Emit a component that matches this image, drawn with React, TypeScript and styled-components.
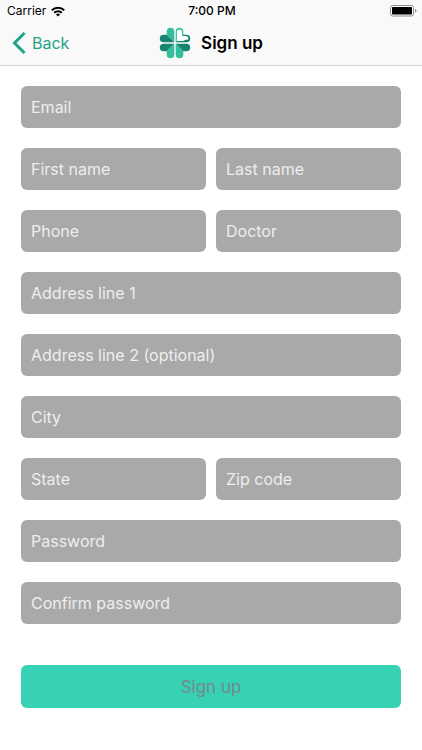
import React from "react";
import styled, { createGlobalStyle } from "styled-components";

const GlobalStyle = createGlobalStyle`
  *, *::before, *::after { box-sizing: border-box; }
  body {
    margin: 0;
    background: #ffffff;
    font-family: Inter, "Liberation Sans", sans-serif;
    color: #000000;
  }
  button, input { font-family: inherit; }
`;

const Screen = styled.div`
  display: flex;
  flex-direction: column;
  min-height: 100vh;
`;

const Header = styled.header`
  background: #f9f9f9;
  border-bottom: 1px solid #d3d3d3;
`;

const Thirds = styled.div`
  display: grid;
  grid-template-columns: 1fr auto 1fr;
  align-items: center;
`;

const StatusBar = styled(Thirds)`
  height: 22px;
  padding: 0 5px 0 7px;
  font-size: 12px;
  line-height: 16px;
`;

const Carrier = styled.span`
  display: flex;
  align-items: center;
  gap: 5px;
`;

const Clock = styled.time`
  font-weight: 500;
`;

const BatteryIcon = styled.svg`
  justify-self: end;
`;

const NavBar = styled(Thirds)`
  height: 43px;
  padding: 0 12px 1px;
`;

const BackButton = styled.button`
  display: flex;
  align-items: center;
  justify-self: start;
  gap: 6px;
  padding: 0;
  border: 0;
  background: none;
  color: #1fa388;
  font-size: 16px;
  line-height: 22px;
  cursor: pointer;
`;

const Brand = styled.div`
  display: flex;
  align-items: center;
  gap: 10px;
`;

const Title = styled.h1`
  margin: 0;
  font-size: 17px;
  font-weight: 600;
  line-height: 22px;
`;

const Form = styled.form`
  display: flex;
  flex-direction: column;
  gap: 20px;
  padding: 20px 21px;
`;

const FieldRow = styled.div`
  display: flex;
  gap: 10px;
`;

const Field = styled.input`
  flex: 1;
  min-width: 0;
  height: 42px;
  padding: 0 10px;
  border: 0;
  border-radius: 6px;
  background: #a9a9a9;
  color: #ffffff;
  font-size: 16px;
  line-height: 22px;

  &::placeholder {
    color: #eeeeee;
    opacity: 1;
  }
`;

const SubmitButton = styled.button`
  height: 43px;
  margin-top: 21px;
  border: 0;
  border-radius: 6px;
  background: #37d2b4;
  color: #76898b;
  font-size: 17px;
  line-height: 22px;
  cursor: pointer;
`;

type FieldSpec = { name: string; label: string; type?: string };

const rows: FieldSpec[][] = [
  [{ name: "email", label: "Email", type: "email" }],
  [
    { name: "firstName", label: "First name" },
    { name: "lastName", label: "Last name" },
  ],
  [
    { name: "phone", label: "Phone", type: "tel" },
    { name: "doctor", label: "Doctor" },
  ],
  [{ name: "address1", label: "Address line 1" }],
  [{ name: "address2", label: "Address line 2 (optional)" }],
  [{ name: "city", label: "City" }],
  [
    { name: "state", label: "State" },
    { name: "zip", label: "Zip code" },
  ],
  [{ name: "password", label: "Password", type: "password" }],
  [{ name: "confirmPassword", label: "Confirm password", type: "password" }],
];

const Wifi = () => (
  <svg width="14" height="11" viewBox="0 0 14 11" aria-hidden="true">
    <g fill="none" stroke="#000" strokeWidth="2">
      <path d="M0.8 4.2a8.8 8.8 0 0 1 12.4 0" />
      <path d="M3.2 6.7a5.4 5.4 0 0 1 7.6 0" />
    </g>
    <path d="M7 10.6 4.9 8.5a3 3 0 0 1 4.2 0Z" />
  </svg>
);

const Battery = () => (
  <BatteryIcon width="27" height="12" viewBox="0 0 27 12" role="img" aria-label="Battery full">
    <rect x="0.5" y="0.5" width="23" height="10.5" rx="2.2" fill="#fff" stroke="#8c8c8c" />
    <rect x="2" y="2" width="20" height="7.5" rx="0.8" />
    <path d="M25 4v3.6c1-.3 1.5-1 1.5-1.8S26 4.3 25 4Z" fill="#8c8c8c" />
  </BatteryIcon>
);

const Leaf = ({ transform }: { transform?: string }) => (
  <g transform={transform}>
    <path d="M15.3 15.3V4.6a3.8 3.8 0 0 0-7.6 0V7.7Z" fill="#35bda0" />
    <path d="M15.3 15.3H4.6a3.8 3.8 0 0 1 0-7.6H7.7Z" fill="#16846f" />
  </g>
);

const Clover = () => (
  <svg width="32" height="32" viewBox="0 0 32 32" aria-hidden="true">
    <Leaf />
    <Leaf transform="matrix(1 0 0 -1 0 32)" />
    <Leaf transform="matrix(-1 0 0 1 32 0)" />
    <Leaf transform="matrix(-1 0 0 -1 32 32)" />
    <path
      d="M17.9 14.1V5a2.6 2.6 0 0 1 5.200 0V8.900H27a2.600 2.600 0 0 1 1.800 4.200L27.500 12.600 24 14.100Z"
      fill="#fff"
    />
  </svg>
);

export default function App() {
  return (
    <Screen>
      <GlobalStyle />
      <Header>
        <StatusBar>
          <Carrier>
            Carrier
            <Wifi />
          </Carrier>
          <Clock>7:00 PM</Clock>
          <Battery />
        </StatusBar>
        <NavBar>
          <BackButton type="button">
            <svg width="14" height="22" viewBox="0 0 14 22" aria-hidden="true">
              <path d="M12.5 1 2.5 11l10 10" fill="none" stroke="currentColor" strokeWidth="3" />
            </svg>
            Back
          </BackButton>
          <Brand>
            <Clover />
            <Title>Sign up</Title>
          </Brand>
        </NavBar>
      </Header>
      <Form onSubmit={(event: React.FormEvent) => event.preventDefault()}>
        {rows.map((row) => (
          <FieldRow key={row[0].name}>
            {row.map(({ name, label, type = "text" }) => (
              <Field key={name} name={name} type={type} placeholder={label} aria-label={label} />
            ))}
          </FieldRow>
        ))}
        <SubmitButton type="submit">Sign up</SubmitButton>
      </Form>
    </Screen>
  );
}
